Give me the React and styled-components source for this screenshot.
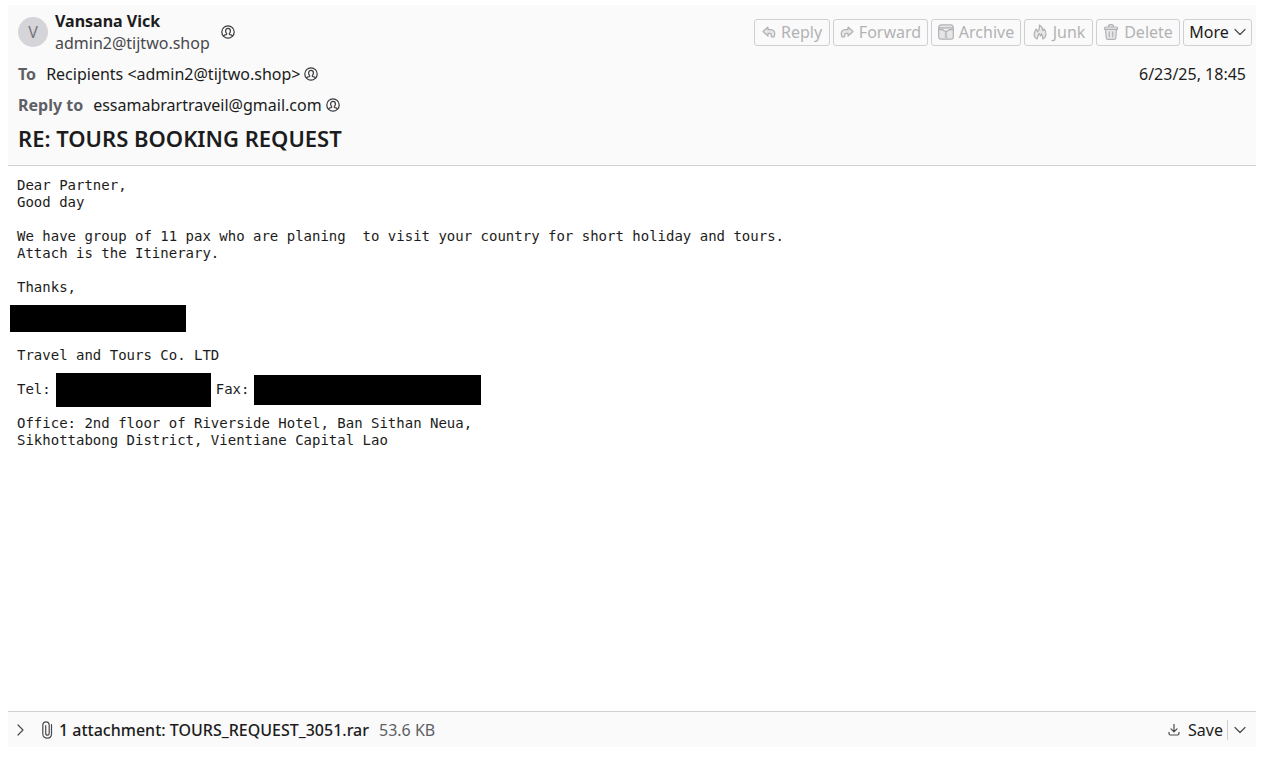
import React from 'react'
import styled, { createGlobalStyle } from 'styled-components'

const Color = {
  text: '#1c1c20',
  label: '#5f5f66',
  icon: '#4a4a4e',
  disabled: '#b2b2b4',
  border: '#d0d0d2',
  panel: '#fafafa',
}

// icons
const ContactIcon = () => (
  <Icon viewBox="0 0 14 14" $size={14} $color="#3a3a3e">
    <circle cx="7" cy="7" r="6.2" />
    <path d="M2.800 10.900c.3-.9 1.100-1.200 2.400-1.300.6-.1.7-.7.3-1.200-.6-.8-.9-1.500-.9-2.500 0-1.500.9-2.500 2.400-2.500s2.400 1 2.400 2.500c0 1-.3 1.700-.9 2.500-.4.5-.3 1.100.3 1.200 1.300.1 2.100.4 2.400 1.300" />
  </Icon>
)

const ReplyIcon = () => (
  <Icon viewBox="0 0 14 14" $size={14} $filled>
    <path d="M6 2 1 6.500 6 11V8.300h1.500c1.500 0 2 .8 1.800 2.200v1.300h2.900c1.300-3.800.4-7.100-3.200-7.100H6z" />
  </Icon>
)

const ForwardIcon = () => (
  <Icon viewBox="0 0 14 14" $size={14} $filled>
    <path d="M8 2l5 4.500L8 11V8.300H6.500c-1.500 0-2 .8-1.800 2.200v1.300H1.800C.5 8 1.400 4.700 5 4.700h3z" />
  </Icon>
)

const ArchiveIcon = () => (
  <Icon viewBox="0 0 16 16" $size={16} $filled>
    <path d="M.7 4.300c0-2 1-3.400 2.700-3.400h9.200c1.700 0 2.700 1.400 2.700 3.400v8.800c0 1.300-.8 2.100-2.100 2.100H2.800c-1.300 0-2.100-.8-2.100-2.100z" />
    <path fill="#fafafa" d="M1.200 3.800h13.600M3 5.600h1.800l1.200 1.200h1L8 8l1-1.200h1l1.200-1.200H13" />
    <path d="M1 5.600h2M13 5.600h2M8 8v1.200M7.200 9.800h.8M8 11h.8M7.200 12.200h.8M8 13.400h.8" />
  </Icon>
)

const JunkIcon = () => (
  <Icon viewBox="0 0 16 16" $size={16} $filled>
    <path d="M5.200 15C2.900 13.800 1.900 11.900 2.200 9.600c.2-1.600 1.600-2.600 1.700-4.600 1 .6 1.600 1.500 1.600 2.700C7.200 6 7.800 3.600 7.300 1c2.400 1.300 3.500 3.300 3.500 5.700.8-.4 1.200-1 1.300-1.900 1.500 1.700 2.200 3.600 1.900 5.800-.3 2.200-1.500 3.600-3.300 4.400.4-1.900 0-3.700-1.300-5.200-.1 1.100-.4 1.700-1 2.200-.2-1.100-.7-1.900-1.500-2.500-.2 2.100-1.900 3.200-1.700 5.500z" />
  </Icon>
)

const TrashIcon = () => (
  <Icon viewBox="0 0 16 16" $size={16} $filled>
    <path d="M2.500 5.500h11l-.7 8.100c-.1 1.100-.7 1.800-1.800 1.800H5c-1.100 0-1.700-.7-1.800-1.800z" />
    <path d="M1.500 5.300V4.200c0-.8.4-1.200 1.200-1.200h10.600c.8 0 1.200.4 1.200 1.200v1.100zM5.500 2.800c0-1.400.7-2.200 1.700-2.200h1.600c1 0 1.700.8 1.700 2.200M6.300 7.800v5M9.700 7.800v5" />
  </Icon>
)

const ChevronDown = () => (
  <Icon viewBox="0 0 12 12" $size={12} $color={Color.icon}>
    <path d="M1 3.500l5 5 5-5" />
  </Icon>
)

const ChevronRight = () => (
  <Icon viewBox="0 0 12 12" $size={12} $color={Color.icon}>
    <path d="M4 1l5 5-5 5" />
  </Icon>
)

const ClipIcon = () => (
  <Icon viewBox="0 0 12 18" $size={12} $height={18} $color={Color.icon}>
    <path d="M10.500 3.500v9.300c0 2.700-1.700 4.400-4.200 4.400s-4.500-1.700-4.500-4.400V4.300C1.800 2.100 3 .8 5 .8s3.200 1.300 3.200 3.500v7.900c0 1.200-.7 2-1.700 2s-1.800-.8-1.800-2V4.500" />
  </Icon>
)

const SaveIcon = () => (
  <Icon viewBox="0 0 12 12" $size={12} $color={Color.icon}>
    <path d="M6 .5v7M3 4.800l3 3 3-3M1 8.300v1.200c0 .9.500 1.500 1.400 1.500h7.200c.9 0 1.400-.6 1.400-1.500V8.300" />
  </Icon>
)

const actions = [
  { name: 'Reply', icon: <ReplyIcon />, width: 76 },
  { name: 'Forward', icon: <ForwardIcon />, width: 95 },
  { name: 'Archive', icon: <ArchiveIcon />, width: 90 },
  { name: 'Junk', icon: <JunkIcon />, width: 69 },
  { name: 'Delete', icon: <TrashIcon />, width: 84 },
]

// component
const App = () => (
  <Page>
    <GlobalStyle />
    <Header>
      <TopRow>
        <Sender>
          <Avatar>V</Avatar>
          <SenderText>
            <SenderName>Vansana Vick</SenderName>
            <SenderMail>admin2@tijtwo.shop</SenderMail>
          </SenderText>
          <ContactButton aria-label="Add to contacts"><ContactIcon /></ContactButton>
        </Sender>
        <Toolbar>
          {actions.map(({ name, icon, width }) => (
            <ToolButton key={name} disabled $width={width}>{icon}{name}</ToolButton>
          ))}
          <ToolButton $width={69}>More<ChevronDown /></ToolButton>
        </Toolbar>
      </TopRow>
      <FieldRow>
        <Label>To</Label>
        <span>Recipients &lt;admin2@tijtwo.shop&gt;</span>
        <ContactButton aria-label="Add to contacts"><ContactIcon /></ContactButton>
        <DateText>6/23/25, 18:45</DateText>
      </FieldRow>
      <FieldRow>
        <Label>Reply to</Label>
        <span>essamabrartraveil@gmail.com</span>
        <ContactButton aria-label="Add to contacts"><ContactIcon /></ContactButton>
      </FieldRow>
      <Subject>RE: TOURS BOOKING REQUEST</Subject>
    </Header>
    <Message>
      <Paragraph>{'Dear Partner,\nGood day'}</Paragraph>
      <Paragraph>{'We have group of 11 pax who are planing  to visit your country for short holiday and tours.\nAttach is the Itinerary.'}</Paragraph>
      <Paragraph>Thanks,</Paragraph>
      <Line>
        <Redacted $width={176} $height={27} $outdent />
      </Line>
      <Paragraph>Travel and Tours Co. LTD</Paragraph>
      <Line>
        Tel:<Redacted $width={155} $height={34} />
        Fax:<Redacted $width={227} $height={30} />
      </Line>
      <Paragraph>{'Office: 2nd floor of Riverside Hotel, Ban Sithan Neua,\nSikhottabong District, Vientiane Capital Lao'}</Paragraph>
    </Message>
    <Footer>
      <PlainButton aria-label="Show attachments"><ChevronRight /></PlainButton>
      <Attachment>
        <ClipIcon />
        <FileName>1 attachment: TOURS_REQUEST_3051.rar</FileName>
        <FileSize>53.6 KB</FileSize>
      </Attachment>
      <PlainButton><SaveIcon />Save</PlainButton>
      <SaveMenu aria-label="Save options"><ChevronDown /></SaveMenu>
    </Footer>
  </Page>
)

// view(CSS in JS)
const GlobalStyle = createGlobalStyle`
  * {
    box-sizing: border-box;
  }
  body {
    background: #fff;
    margin: 0;
  }
`;

const Icon = styled.svg`
  fill: ${({ $filled }) => ($filled ? '#e6e6e8' : 'none')};
  flex: none;
  height: ${({ $size, $height }) => $height || $size}px;
  stroke: ${({ $color }) => $color || 'currentColor'};
  stroke-linecap: round;
  stroke-linejoin: round;
  stroke-width: 1.2;
  width: ${({ $size }) => $size}px;
`;

const Page = styled.div`
  color: ${Color.text};
  display: flex;
  flex-direction: column;
  font-family: 'Noto Sans', 'Open Sans', sans-serif;
  font-size: 16px;
  line-height: 22px;
  min-height: 100vh;
  padding: 5px 12px 17px 8px;
`;

const Header = styled.header`
  background: ${Color.panel};
  border-bottom: 1px solid ${Color.border};
  padding: 5px 4px 8px 10px;
`;

const TopRow = styled.div`
  align-items: flex-start;
  display: flex;
  justify-content: space-between;
  margin-bottom: 4px;
`;

const Sender = styled.div`
  align-items: center;
  display: flex;
  gap: 7px;
`;

const Avatar = styled.div`
  background: #d4d4d9;
  border-radius: 50%;
  color: #76767e;
  height: 30px;
  line-height: 30px;
  text-align: center;
  width: 30px;
`;

const SenderText = styled.div`
  display: flex;
  flex-direction: column;
`;

const SenderName = styled.span`
  font-weight: 700;
`;

const SenderMail = styled.span`
  color: #48484c;
`;

const PlainButton = styled.button`
  align-items: center;
  background: none;
  border: 0;
  color: inherit;
  display: flex;
  font: inherit;
  gap: 8px;
  padding: 0;
`;

const ContactButton = styled(PlainButton)`
  margin-left: 4px;
`;

const Toolbar = styled.div`
  display: flex;
  gap: 3px;
  padding-top: 9px;
`;

const ToolButton = styled.button`
  align-items: center;
  background: transparent;
  border: 1px solid ${Color.border};
  border-radius: 3px;
  color: ${Color.text};
  display: flex;
  font: inherit;
  gap: 5px;
  height: 27px;
  justify-content: center;
  line-height: 24px;
  padding: 0 0 1px;
  width: ${({ $width }) => $width}px;
  &:disabled {
    color: ${Color.disabled};
  }
`;

const FieldRow = styled.div`
  align-items: center;
  display: flex;
  height: 31px;
`;

const Label = styled.span`
  color: ${Color.label};
  font-weight: 700;
  margin-right: 10px;
`;

const DateText = styled.time`
  margin-left: auto;
  padding-right: 6px;
`;

const Subject = styled.h1`
  font-size: 22px;
  font-weight: 600;
  line-height: 37px;
  margin: 0;
`;

const Message = styled.main`
  display: flex;
  flex: 1;
  flex-direction: column;
  font-family: 'DejaVu Sans Mono', monospace;
  font-size: 14px;
  gap: 17px;
  line-height: 17px;
  padding: 11px 9px;
`;

const Paragraph = styled.p`
  margin: 0;
  white-space: pre-wrap;
`;

const Line = styled.div`
  align-items: center;
  display: flex;
  gap: 5px;
  height: 17px;
`;

const Redacted = styled.span`
  background: #000;
  flex: none;
  height: ${({ $height }) => $height}px;
  margin: ${({ $outdent }) => ($outdent ? '0 0 6px -7px' : 0)};
  width: ${({ $width }) => $width}px;
`;

const Footer = styled.footer`
  align-items: center;
  background: ${Color.panel};
  border-top: 1px solid ${Color.border};
  display: flex;
  height: 36px;
  padding: 0 10px 0 6px;
`;

const Attachment = styled.div`
  align-items: center;
  display: flex;
  flex: 1;
  gap: 6px;
  margin-left: 15px;
`;

const FileName = styled.span`
  font-weight: 500;
`;

const FileSize = styled.span`
  color: ${Color.label};
  margin-left: 4px;
`;

const SaveMenu = styled(PlainButton)`
  border-left: 1px solid ${Color.border};
  height: 20px;
  margin-left: 4px;
  padding-left: 6px;
`;

// export
export default App
